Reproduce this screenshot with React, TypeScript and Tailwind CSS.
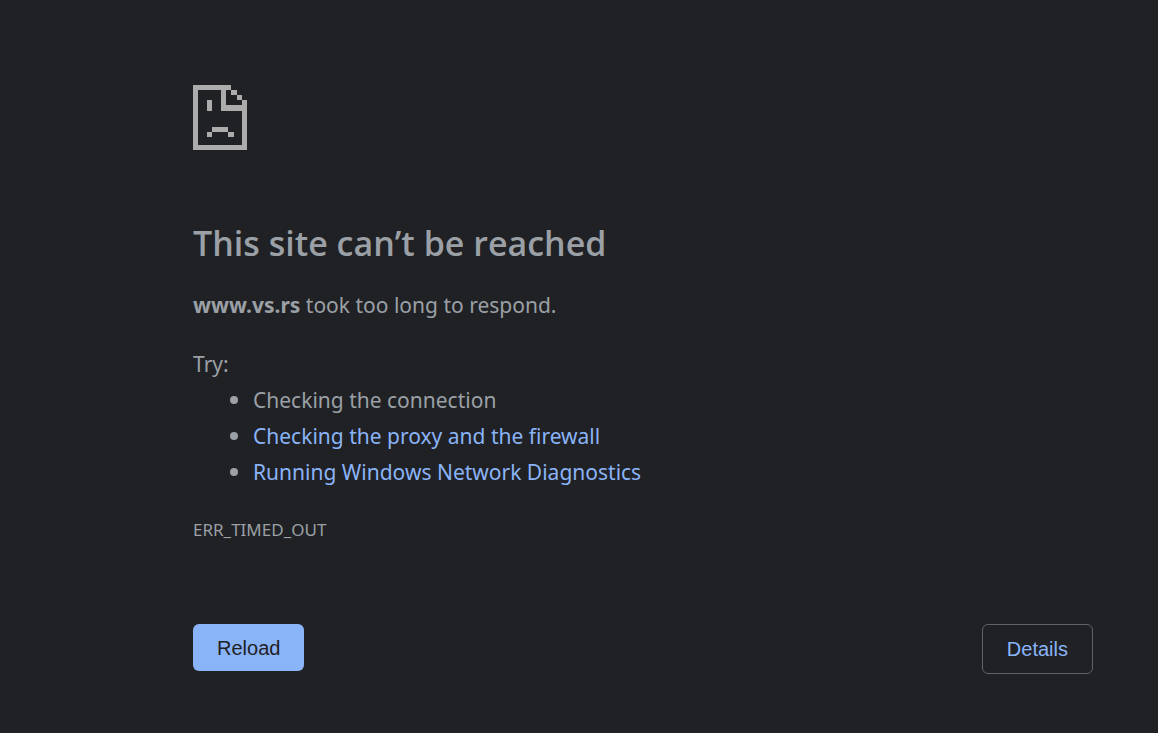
import React from "react";

const suggestions = [
  { label: "Checking the connection" },
  { label: "Checking the proxy and the firewall", href: "#proxy" },
  { label: "Running Windows Network Diagnostics", href: "#diagnostics" },
];

const SadPage = () => (
  <svg
    className="block w-[54px] h-[66px]"
    viewBox="0 0 54 66"
    fill="#acacac"
    shapeRendering="crispEdges"
    aria-hidden="true"
  >
    {/* sheet with the folded corner */}
    <path d="M0 1H38V6H33V21H54V66H0ZM5 6V61H49V27H28V6Z" fillRule="evenodd" />
    <path d="M38 6H44V11H38ZM44 11H49V16H44ZM49 16H54V21H49Z" />
    {/* eye and mouth */}
    <path d="M14 16H19V27H14ZM19 43H35V48H19ZM14 48H19V53H14ZM35 48H41V53H35Z" />
  </svg>
);

const App = () => {
  return (
    <div className="min-h-screen bg-[#202124] text-[#9aa0a6] font-['Noto_Sans','Open_Sans',sans-serif]">
      <main className="ml-[193px] mr-[65px] pt-[84px] pb-12">
        <SadPage />

        <h1 className="mt-[69px] text-[34px] leading-12 font-semibold font-['Open_Sans','Noto_Sans',sans-serif]">
          This site can’t be reached
        </h1>
        <p className="mt-5 text-[21px] leading-9">
          <strong className="font-bold">www.vs.rs</strong> took too long to
          respond.
        </p>

        <div className="mt-[23px] text-[21px] leading-9">
          <p>Try:</p>
          <ul className="pl-[37px]">
            {suggestions.map(({ label, href }) => (
              <li
                key={label}
                className="flex items-center gap-[15px] before:size-2 before:shrink-0 before:rounded-full before:bg-[#9aa0a6]"
              >
                {href ? (
                  <a href={href} className="text-[#8ab4f8]">
                    {label}
                  </a>
                ) : (
                  label
                )}
              </li>
            ))}
          </ul>
        </div>

        <p className="mt-[22px] text-[17px] leading-9">ERR_TIMED_OUT</p>

        <div className="mt-[76px] flex items-start justify-between font-['Liberation_Sans',Arial,sans-serif] text-xl">
          <button
            type="button"
            className="h-[47px] px-6 rounded-md bg-[#8ab4f8] text-[#202124]"
          >
            Reload
          </button>
          <button
            type="button"
            className="h-[50px] px-6 rounded-md border border-[#5f6368] text-[#8ab4f8]"
          >
            Details
          </button>
        </div>
      </main>
    </div>
  );
};

export default App;
